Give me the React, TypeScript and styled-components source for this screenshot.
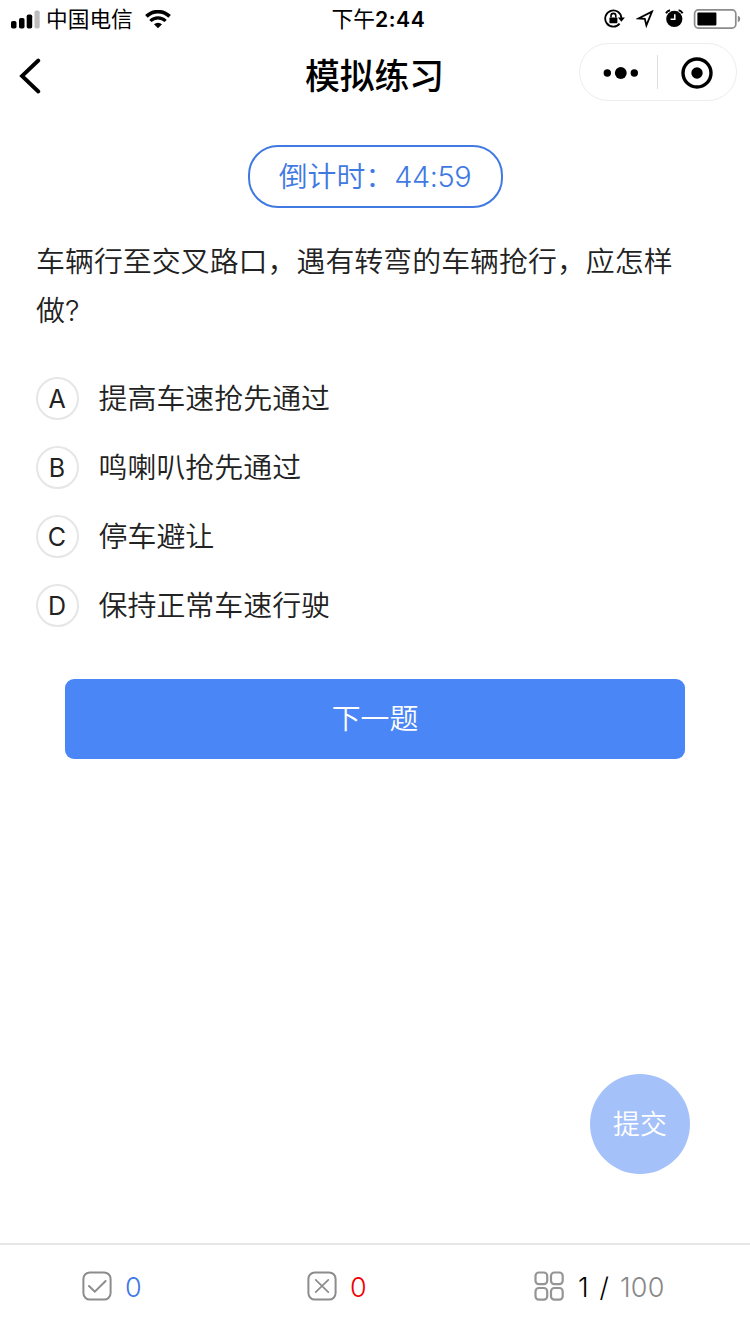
import React from 'react';
import styled, { createGlobalStyle } from 'styled-components';

const GlobalStyle = createGlobalStyle`
  * { box-sizing: border-box; }
  body {
    margin: 0;
    background: #fff;
    color: #222;
    font-family: Inter, "Noto Sans CJK SC", sans-serif;
  }
  button { font: inherit; border: 0; padding: 0; background: none; color: inherit; }
  svg { display: block; flex: none; }
`;

const Page = styled.div`
  width: 750px;
  height: 1334px;
  display: flex;
  flex-direction: column;
  overflow: hidden;
  background: #fff;
`;

const StatusBar = styled.div`
  height: 38px;
  display: grid;
  grid-template-columns: 1fr auto 1fr;
  align-items: center;
  padding: 0 9px 0 11px;
  color: #000;
  font-size: 21.7px;
  line-height: 36px;
`;

const StatusGroup = styled.div<{ $end?: boolean }>`
  display: flex;
  align-items: center;
  justify-content: ${(p) => (p.$end ? 'flex-end' : 'flex-start')};
`;

const Carrier = styled.span`
  margin: 0 12px 0 6px;
`;

const Clock = styled.span`
  font-weight: 400;
  padding-left: 5px;
`;

const ClockDigits = styled.span`
  font-weight: 600;
  font-size: 21.2px;
  letter-spacing: 0.6px;
`;

const NavBar = styled.header`
  height: 70px;
  display: grid;
  grid-template-columns: 1fr auto 1fr;
  align-items: center;
  padding: 0 13px 0 18px;
  color: #000;
`;

const Title = styled.h1`
  margin: 5px 6px 0 0;
  font-size: 34.8px;
  line-height: 50px;
  font-weight: 500;
`;

const Capsule = styled.div`
  justify-self: end;
  width: 158px;
  height: 58px;
  margin-bottom: 2px;
  border: 1px solid #ededed;
  border-radius: 29px;
  display: grid;
  grid-template-columns: 77px 1px 78px;
  align-items: center;
`;

const CapsuleButton = styled.button<{ $shift?: number }>`
  display: flex;
  justify-content: center;
  padding-top: 1px;
  padding-left: ${(p) => p.$shift ?? 0}px;
`;

const CapsuleDivider = styled.span`
  width: 1px;
  height: 34px;
  background: #dedede;
`;

const Main = styled.main`
  flex: 1;
  display: flex;
  flex-direction: column;
  padding-top: 37px;
`;

const Countdown = styled.div`
  align-self: center;
  width: 255px;
  height: 63px;
  border: 2px solid #4179e2;
  border-radius: 30px;
  display: flex;
  align-items: center;
  justify-content: center;
  color: #4179e2;
  font-size: 28.9px;
  line-height: 58px;
  font-weight: 350;
`;

const CountdownDigits = styled.span`
  font-weight: 300;
  letter-spacing: -0.4px;
`;

const Question = styled.p`
  margin: 29px 0 0 36px;
  width: 660px;
  font-size: 28.95px;
  line-height: 49px;
  font-weight: 350;
`;

const Options = styled.ul`
  list-style: none;
  margin: 42px 0 0;
  padding: 0 35.5px;
  display: flex;
  flex-direction: column;
  gap: 26px;
`;

const Option = styled.li`
  height: 43px;
  display: flex;
  align-items: center;
  gap: 20px;
  font-size: 28.95px;
  line-height: 43px;
  font-weight: 350;
`;

const OptionBadge = styled.span`
  width: 43px;
  height: 43px;
  border: 2px solid #e6e6e6;
  border-radius: 50%;
  display: flex;
  align-items: center;
  justify-content: center;
  padding-top: 1px;
  font-size: 25px;
  font-weight: 400;
`;

const NextButton = styled.button`
  margin: 52px 65px 0;
  height: 80px;
  padding-bottom: 6px;
  border-radius: 9px;
  background: #4a86f5;
  color: #fff;
  font-size: 28.9px;
  font-weight: 350;
`;

const SubmitButton = styled.button`
  align-self: flex-end;
  margin: auto 60px 69px 0;
  width: 100px;
  height: 100px;
  padding-bottom: 4px;
  border-radius: 50%;
  background: #a5c1fa;
  color: #fff;
  font-size: 26.9px;
  font-weight: 350;
`;

const Footer = styled.footer`
  height: 91px;
  border-top: 2px solid #e6e6e6;
  display: flex;
  padding-left: 82px;
  padding-bottom: 7px;
`;

const Stat = styled.div<{ $width: number; $color: string }>`
  width: ${(p) => p.$width}px;
  display: flex;
  align-items: center;
  gap: 13px;
  color: ${(p) => p.$color};
  font-size: 27px;
  font-weight: 300;
`;

const StatText = styled.span`
  padding-top: 2px;
  white-space: pre;
`;

const PageText = styled(StatText)`
  padding-left: 1px;
  letter-spacing: 0.2px;
  word-spacing: 3px;
`;

const Total = styled.span`
  color: #888;
`;

const SignalIcon = () => (
  <svg width="29" height="19" viewBox="0 0 29 19">
    <rect x="0" y="11" width="5.5" height="7.5" rx="1.8" />
    <rect x="8" y="8" width="5.5" height="10.5" rx="1.8" />
    <rect x="15.7" y="4.5" width="5.5" height="14" rx="1.8" />
    <rect x="23.5" y="0.5" width="5.2" height="18" rx="1.8" fill="#bdbdbd" />
  </svg>
);

const WifiIcon = () => (
  <svg width="26" height="19" viewBox="0 0 26 19" fill="none" stroke="#000">
    <path d="M1.4 6.4 A16.5 16.5 0 0 1 24.6 6.4" strokeWidth="3.6" />
    <path d="M5.4 11 A10.6 10.6 0 0 1 20.6 11" strokeWidth="3.2" />
    <path d="M13 18.2 L9 14.3 A6 6 0 0 1 17 14.3 Z" fill="#000" stroke="none" />
  </svg>
);

const RotationLockIcon = () => (
  <svg width="21" height="19" viewBox="0 0 21 19" fill="none" stroke="#000" strokeWidth="1.8">
    <path d="M15.6 14.6 A8.1 8.1 0 1 1 17.4 9.2" />
    <path d="M13.9 8.6 H20.9 L17.4 12.8 Z" fill="#000" stroke="none" />
    <rect x="5.4" y="8.4" width="8" height="5.8" rx="0.6" fill="#000" stroke="none" />
    <path d="M7 8.5 V6.8 A2.4 2.4 0 0 1 11.8 6.8 V8.5" strokeWidth="1.6" />
  </svg>
);

const LocationIcon = () => (
  <svg width="18" height="18" viewBox="0 0 18 18" fill="none" stroke="#000" strokeWidth="1.8">
    <path d="M16 1.6 L2.4 8.5 L8.8 8.8 L10.4 15.4 Z" strokeLinejoin="miter" />
  </svg>
);

const AlarmIcon = () => (
  <svg width="19" height="19" viewBox="0 0 19 19">
    <circle cx="9.3" cy="9.9" r="8.1" />
    <path d="M1 4.2 A6 6 0 0 1 5 1.2 M13.6 1.2 A6 6 0 0 1 17.6 4.2" fill="none" stroke="#000" strokeWidth="2" />
    <path d="M9.8 5.2 V10.2 H5.6" fill="none" stroke="#fff" strokeWidth="1.5" />
  </svg>
);

const BatteryIcon = () => (
  <svg width="48" height="20" viewBox="0 0 48 20">
    <rect x="1.6" y="0.9" width="41.2" height="18.2" rx="3.8" fill="none" stroke="#8c8c8c" strokeWidth="1.7" />
    <rect x="4.4" y="3.6" width="19" height="12.8" rx="0.8" />
    <path d="M44.8 6.8 A3.3 3.3 0 0 1 44.8 13.2 Z" fill="#8c8c8c" />
  </svg>
);

const BackIcon = styled.svg`
  width: 24px;
  height: 36px;
  margin-top: 5px;
  fill: none;
  stroke: #000;
  stroke-width: 3.8px;
  stroke-linecap: round;
`;

const MoreIcon = () => (
  <svg width="36" height="14" viewBox="0 0 36 14">
    <circle cx="4.3" cy="7" r="3.7" />
    <circle cx="17.8" cy="7" r="5.9" />
    <circle cx="31.3" cy="7" r="3.7" />
  </svg>
);

const TargetIcon = () => (
  <svg width="32" height="32" viewBox="0 0 32 32">
    <circle cx="16" cy="16" r="14" fill="none" stroke="#000" strokeWidth="3.4" />
    <circle cx="16" cy="16" r="5.7" />
  </svg>
);

const CheckBoxIcon = () => (
  <svg width="30" height="30" viewBox="0 0 30 30" fill="none" stroke="#8c8c8c" strokeWidth="2">
    <rect x="1.4" y="1.4" width="27.2" height="27.2" rx="6.5" />
    <path d="M7 15 L12.8 20.7 L23.6 10" strokeLinecap="round" />
  </svg>
);

const CrossBoxIcon = () => (
  <svg width="30" height="30" viewBox="0 0 30 30" fill="none" stroke="#8c8c8c" strokeWidth="2">
    <rect x="1.4" y="1.4" width="27.2" height="27.2" rx="6.5" />
    <path d="M8.7 8.9 L21.3 21.1 M21.3 8.9 L8.7 21.1" strokeLinecap="round" strokeWidth="1.7" />
  </svg>
);

const GridIcon = () => (
  <svg width="30" height="30" viewBox="0 0 30 30" fill="none" stroke="#959595" strokeWidth="2.2">
    <rect x="1.5" y="1.5" width="11.7" height="11.7" rx="3.4" />
    <rect x="17" y="1.5" width="11.7" height="11.7" rx="3.4" />
    <rect x="1.5" y="17" width="11.7" height="11.7" rx="3.4" />
    <rect x="17" y="17" width="11.7" height="11.7" rx="3.4" />
  </svg>
);

const StatusIcons = styled(StatusGroup)`
  margin-top: -1px;
  & > svg:nth-child(1) { margin-right: 11px; }
  & > svg:nth-child(2) { margin-right: 11px; }
  & > svg:nth-child(3) { margin-right: 9px; }
`;

const options = [
  { key: 'A', text: '提高车速抢先通过' },
  { key: 'B', text: '鸣喇叭抢先通过' },
  { key: 'C', text: '停车避让' },
  { key: 'D', text: '保持正常车速行驶' },
];

export default function App() {
  return (
    <Page lang="zh-CN">
      <GlobalStyle />
      <StatusBar>
        <StatusGroup>
          <SignalIcon />
          <Carrier>中国电信</Carrier>
          <WifiIcon />
        </StatusGroup>
        <Clock>
          下午<ClockDigits>2:44</ClockDigits>
        </Clock>
        <StatusIcons $end>
          <RotationLockIcon />
          <LocationIcon />
          <AlarmIcon />
          <BatteryIcon />
        </StatusIcons>
      </StatusBar>
      <NavBar>
        <BackIcon viewBox="0 0 24 36">
          <path d="M20.3 2.5 L4 18 L20.3 33.5" />
        </BackIcon>
        <Title>模拟练习</Title>
        <Capsule>
          <CapsuleButton aria-label="更多" $shift={5}>
            <MoreIcon />
          </CapsuleButton>
          <CapsuleDivider />
          <CapsuleButton aria-label="关闭">
            <TargetIcon />
          </CapsuleButton>
        </Capsule>
      </NavBar>
      <Main>
        <Countdown>
          倒计时：<CountdownDigits>44:59</CountdownDigits>
        </Countdown>
        <Question>车辆行至交叉路口，遇有转弯的车辆抢行，应怎样做?</Question>
        <Options>
          {options.map((o) => (
            <Option key={o.key}>
              <OptionBadge>{o.key}</OptionBadge>
              {o.text}
            </Option>
          ))}
        </Options>
        <NextButton>下一题</NextButton>
        <SubmitButton>提交</SubmitButton>
      </Main>
      <Footer>
        <Stat $width={225} $color="#3f78e8">
          <CheckBoxIcon />
          <StatText>0</StatText>
        </Stat>
        <Stat $width={227} $color="#f00000">
          <CrossBoxIcon />
          <StatText>0</StatText>
        </Stat>
        <Stat $width={200} $color="#000">
          <GridIcon />
          <PageText>
            1 / <Total>100</Total>
          </PageText>
        </Stat>
      </Footer>
    </Page>
  );
}
